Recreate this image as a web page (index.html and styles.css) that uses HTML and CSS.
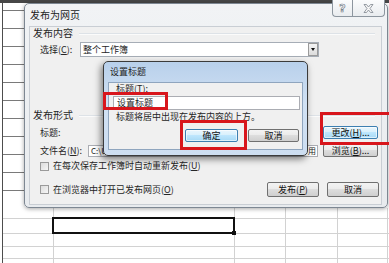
FILE: index.html
```html
<!DOCTYPE html>
<html lang="zh-CN">
<head>
<meta charset="utf-8">
<title>发布为网页</title>
<link rel="stylesheet" href="styles.css">
</head>
<body>
<div class="sheet">
  <div class="cell-select"><span class="fill-handle"></span></div>

  <div class="dlg dlg-publish">
    <div class="titlebar">
      <span class="title">发布为网页</span>
      <div class="caption-btns">
        <span class="cap cap-help">?</span>
        <span class="cap cap-close">
          <svg width="11" height="9" viewBox="0 0 11 9"><path d="M1 0.5h2.5L5.5 3 7.5 0.5H10L7 4.5 10 8.5H7.5L5.5 6 3.5 8.5H1L4 4.5Z" fill="#f7f7f7" stroke="#7d858e" stroke-width="0.8"/></svg>
        </span>
      </div>
    </div>
    <div class="client">
      <div class="group-head"><span>发布内容</span><i class="rule"></i></div>
      <div class="row row-select">
        <span class="lbl lbl-select">选择(<u>C</u>):</span>
        <div class="combo"><span class="combo-text">整个工作簿</span><span class="combo-btn"><i class="tri"></i></span></div>
      </div>
      <div class="group-head group-head2"><span>发布形式</span><i class="rule"></i></div>
      <div class="row row-title">
        <span class="lbl">标题:</span>
        <span class="btn btn-side btn-focus">更改(<u>H</u>)...</span>
      </div>
      <div class="row row-file">
        <span class="lbl lbl-file">文件名(<u>N</u>):</span>
        <div class="field field-file"><span>C:\Users\Administrator\Documents\Book1.htm</span><span class="field-end">用</span></div>
        <span class="btn btn-side">浏览(<u>B</u>)...</span>
      </div>
      <div class="row row-check">
        <span class="chk"></span><span class="chk-text">在每次保存工作簿时自动重新发布(<u>U</u>)</span>
      </div>
      <div class="row row-bottom">
        <span class="chk"></span><span class="chk-text">在浏览器中打开已发布网页(<u>O</u>)</span>
        <div class="actions">
          <span class="btn btn-act">发布(<u>P</u>)</span>
          <span class="btn btn-act">取消</span>
        </div>
      </div>
    </div>
  </div>

  <div class="dlg dlg-title">
    <div class="titlebar titlebar-small">
      <span class="title title-small">设置标题</span>
    </div>
    <div class="panel">
      <div class="panel-lbl">标题(<u>T</u>):</div>
      <div class="field field-title">设置标题</div>
      <div class="panel-note">标题将居中出现在发布内容的上方。</div>
      <div class="panel-actions">
        <span class="btn btn-ok btn-focus">确定</span>
        <span class="btn btn-cancel">取消</span>
      </div>
    </div>
  </div>

  <div class="mark mark-input"></div>
  <div class="mark mark-ok"></div>
  <div class="mark mark-change"></div>
</div>
</body>
</html>
```

FILE: styles.css
```css
* { box-sizing: border-box; }
html, body { margin: 0; padding: 0; }
body {
  width: 389px;
  height: 263px;
  overflow: hidden;
  font-family: "Noto Sans CJK SC", "Noto Sans", sans-serif;
  font-size: 9px;
  color: #262626;
  background: #fff;
}
u { text-decoration: underline; text-underline-offset: 1px; }

/* spreadsheet canvas */
.sheet {
  position: relative;
  width: 389px;
  height: 263px;
  overflow: hidden;
  padding: 217px 0 0 52px;
  background-color: #fff;
  background-image:
    linear-gradient(#474747, #474747),
    linear-gradient(#4d4d4d, #4d4d4d),
    repeating-linear-gradient(to bottom, transparent 0 6px, #7a7a7a 6px 7px, transparent 7px 18px),
    linear-gradient(#d2d2d2, #d2d2d2),
    linear-gradient(#d2d2d2, #d2d2d2),
    linear-gradient(#d2d2d2, #d2d2d2),
    linear-gradient(#d2d2d2, #d2d2d2),
    linear-gradient(#d2d2d2, #d2d2d2),
    linear-gradient(#d2d2d2, #d2d2d2),
    linear-gradient(#d2d2d2, #d2d2d2),
    linear-gradient(#d2d2d2, #d2d2d2),
    linear-gradient(#d2d2d2, #d2d2d2);
  background-size:
    100% 3px,
    1px 100%,
    22px 204px,
    386px 1px,
    386px 1px,
    386px 1px,
    386px 1px,
    1px 55px,
    1px 55px,
    1px 55px,
    1px 55px,
    1px 55px;
  background-position:
    0 0,
    2px 0,
    3px 4px,
    3px 218px,
    3px 233px,
    3px 246px,
    3px 258px,
    53px 208px,
    234px 208px,
    285px 208px,
    337px 208px,
    387px 208px;
  background-repeat: no-repeat;
}
.cell-select {
  position: relative;
  width: 183px;
  height: 17px;
  border: 2px solid #111;
}
.fill-handle {
  position: absolute;
  right: -3px;
  bottom: -3px;
  width: 4px;
  height: 4px;
  background: #111;
}

/* dialogs */
.dlg {
  position: absolute;
  display: flex;
  flex-direction: column;
}
.dlg-publish {
  left: 24px;
  top: 3px;
  width: 364px;
  height: 205px;
  border: 1px solid #7d8792;
  border-radius: 5px;
  background: linear-gradient(#f1f3f5, #e8ebee);
  box-shadow: 0 1px 4px rgba(0, 0, 0, 0.35);
}
.titlebar {
  flex: none;
  height: 22px;
  display: flex;
  align-items: flex-start;
  padding-left: 5px;
}
.title {
  margin-top: 5px;
  font-size: 10px;
  line-height: 12px;
  color: #222;
}
.caption-btns {
  display: flex;
  margin-left: auto;
  margin-right: 2px;
  margin-top: -4px;
}
.cap {
  height: 17px;
  display: flex;
  align-items: center;
  justify-content: center;
  border: 1px solid #8d969f;
  border-top: none;
  background: linear-gradient(#fbfcfd, #e9ecef);
}
.cap-help {
  width: 20px;
  border-right: none;
  border-radius: 0 0 0 4px;
  font-family: "DejaVu Sans", sans-serif;
  font-size: 11px;
  font-weight: bold;
  color: #f7f7f7;
  -webkit-text-stroke: 0.7px #7d858e;
}
.cap-close {
  width: 33px;
  border-radius: 0 0 4px 0;
}

.client {
  flex: none;
  height: 179px;
  margin: 0 5px 0 4px;
  padding: 0 2px 0 3px;
  background: #f0f0f0;
  border: 1px solid #c9ced4;
  display: flex;
  flex-direction: column;
}
.group-head {
  height: 12px;
  display: flex;
  align-items: center;
  font-size: 10px;
  line-height: 12px;
}
.group-head2 { margin-top: 52px; }
.rule {
  flex: 1;
  height: 2px;
  margin: 1px 4px 0 6px;
  border-top: 1px solid #dde2e7;
  border-bottom: 1px solid #fbfbfb;
}
.row {
  display: flex;
  align-items: center;
  line-height: 12px;
}
.lbl { padding-left: 7px; }
.row-select { margin-top: 3px; height: 15px; }
.lbl-select { width: 47px; }
.combo {
  width: 239px;
  height: 15px;
  border: 1px solid #a6adb6;
  background: #fff;
  display: flex;
  align-items: center;
  padding-left: 2px;
}
.combo-text { flex: 1; }
.combo-btn {
  width: 10px;
  height: 13px;
  border: 1px solid #9a9a9a;
  background: linear-gradient(#f4f4f4, #dcdcdc);
  display: flex;
  align-items: center;
  justify-content: center;
}
.tri {
  width: 0;
  height: 0;
  border-left: 2.5px solid transparent;
  border-right: 2.5px solid transparent;
  border-top: 3px solid #111;
}
.row-title { margin-top: 5px; height: 13px; }
.row-file { margin-top: 5px; height: 13px; }
.lbl-file { width: 55px; }
.field {
  background: #fff;
  border: 1px solid #abadb3;
  white-space: nowrap;
  overflow: hidden;
}
.field-file {
  width: 230px;
  height: 12px;
  line-height: 10px;
  padding-left: 2px;
  font-size: 8px;
  display: flex;
}
.field-end { margin-left: auto; padding-right: 1px; }
.btn {
  height: 13px;
  display: flex;
  align-items: center;
  justify-content: center;
  border: 1px solid #707070;
  border-radius: 2px;
  background: linear-gradient(#f3f3f3 0, #ebebeb 45%, #dddddd 50%, #cfcfcf 100%);
  line-height: 11px;
  color: #111;
  white-space: nowrap;
}
.btn-focus {
  border-color: #3c7fb1;
  background: linear-gradient(#eaf6fd 0, #d9f0fc 45%, #bee6fd 50%, #a7d9f5 100%);
  box-shadow: inset 0 0 0 1px rgba(255, 255, 255, 0.6);
}
.btn-side {
  width: 55px;
  margin-left: auto;
  margin-right: 1px;
}
.row-check { margin-top: 3px; height: 12px; }
.chk {
  width: 9px;
  height: 9px;
  margin-left: 7px;
  border: 1px solid #9a9a9a;
  background: linear-gradient(135deg, #dcdcdc, #f6f6f6);
}
.chk-text { margin-left: 4px; }
.row-bottom { margin-top: 10px; height: 15px; }
.actions {
  margin-left: auto;
  display: flex;
  gap: 8px;
}
.btn-act { width: 52px; height: 15px; }

/* inner dialog */
.dlg-title {
  left: 103px;
  top: 61px;
  width: 205px;
  height: 95px;
  border: 1px solid #3b3b3b;
  border-radius: 5px;
  background: linear-gradient(#b8d0eb, #d1e1f3 45%, #cddef1);
  box-shadow: -2px 3px 7px rgba(0, 0, 0, 0.5);
}
.titlebar-small { height: 20px; padding-left: 6px; }
.title-small { margin-top: 4px; font-size: 9px; }
.panel {
  flex: 1;
  margin: 0 4px 5px 4px;
  padding: 0 3px 0 7px;
  background: #f0f0f0;
  border: 1px solid #8fa5be;
  display: flex;
  flex-direction: column;
  line-height: 12px;
}
.panel-lbl { height: 12px; }
.field-title {
  margin: 1px -1px 0 -3px;
  height: 14px;
  line-height: 12px;
  padding-left: 3px;
}
.panel-note { height: 12px; margin-top: 1px; }
.panel-actions {
  margin-top: 6px;
  display: flex;
  justify-content: flex-end;
  gap: 10px;
}
.btn-ok { width: 53px; }
.btn-cancel { width: 51px; }

/* red annotation boxes */
.mark {
  position: absolute;
  border: 3px solid #d8161c;
}
.mark-input { left: 103px; top: 92px; width: 65px; height: 18px; }
.mark-ok { left: 180px; top: 120px; width: 67px; height: 30px; }
.mark-change { left: 320px; top: 112px; width: 74px; height: 33px; }
```
